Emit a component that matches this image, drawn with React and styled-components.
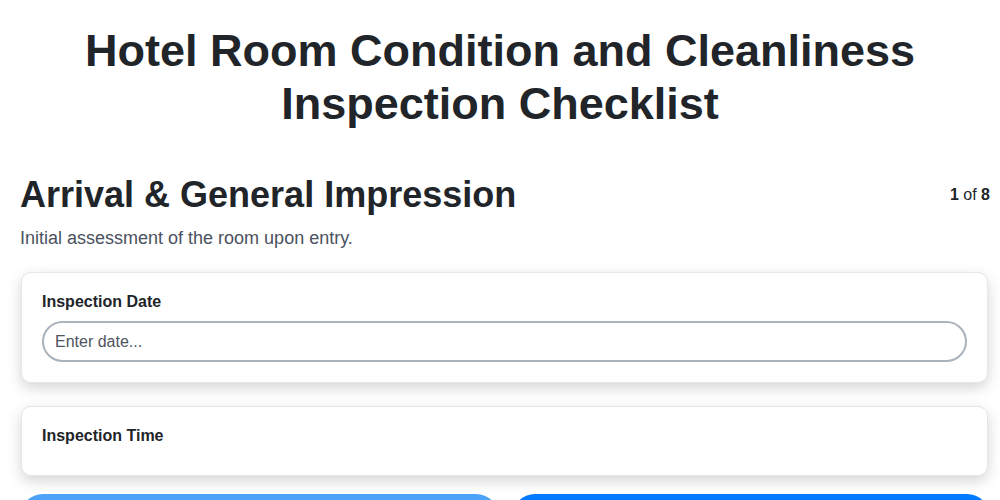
import React from "react";
import styled, { createGlobalStyle } from "styled-components";

const GlobalStyle = createGlobalStyle`
  html, body {
    margin: 0;
    padding: 0;
    background: #ffffff;
    font-family: "Liberation Sans", Arial, sans-serif;
    color: #212529;
  }
  * {
    box-sizing: border-box;
  }
`;

const Page = styled.div`
  padding: 24px 10px 0 20px;
`;

const Title = styled.h1`
  margin: 0 10px 43px 0;
  text-align: center;
  font-size: 45px;
  line-height: 53px;
  font-weight: 700;
  color: #212529;
`;

const SectionHeader = styled.div`
  display: flex;
  justify-content: space-between;
  align-items: center;
`;

const SectionTitle = styled.h2`
  margin: 0;
  font-size: 36px;
  line-height: 43px;
  font-weight: 700;
  color: #212529;
`;

const Progress = styled.div`
  font-size: 16px;
  color: #212529;
  b {
    font-weight: 700;
  }
`;

const Description = styled.p`
  margin: 10px 0 22px;
  font-size: 18px;
  line-height: 24px;
  color: #4a5160;
`;

const Card = styled.div`
  margin: 0 2px 23px 1px;
  padding: 20px;
  background: #ffffff;
  border: 1px solid #e6e6ec;
  border-radius: 10px;
  box-shadow: 0 5px 14px rgba(0, 0, 0, 0.17);
`;

const Label = styled.label`
  display: block;
  margin-bottom: 10px;
  font-size: 16px;
  line-height: 18px;
  font-weight: 700;
  color: #212529;
`;

const Input = styled.input`
  display: block;
  width: 100%;
  height: 41px;
  padding: 0 11px;
  border: 2px solid #aab2bb;
  border-radius: 21px;
  font-family: "Liberation Sans", Arial, sans-serif;
  font-size: 16px;
  color: #212529;
  outline: none;
  &::placeholder {
    color: #4e5560;
  }
`;

const Actions = styled.div`
  display: grid;
  grid-template-columns: 1fr 1fr;
  gap: 13px;
  margin-top: -5px;
`;

const Button = styled.button`
  height: 46px;
  border: none;
  border-radius: 23px;
  background: ${(p) => (p.$primary ? "#007bff" : "#4da3f7")};
  color: #ffffff;
  font-family: "Liberation Sans", Arial, sans-serif;
  font-size: 16px;
  font-weight: 700;
`;

export default function App() {
  return (
    <>
      <GlobalStyle />
      <Page>
        <Title>
          Hotel Room Condition and Cleanliness
          <br />
          Inspection Checklist
        </Title>
        <SectionHeader>
          <SectionTitle>Arrival &amp; General Impression</SectionTitle>
          <Progress>
            <b>1</b> of <b>8</b>
          </Progress>
        </SectionHeader>
        <Description>Initial assessment of the room upon entry.</Description>
        <Card>
          <Label>Inspection Date</Label>
          <Input placeholder="Enter date..." />
        </Card>
        <Card>
          <Label>Inspection Time</Label>
        </Card>
        <Actions>
          <Button>Previous</Button>
          <Button $primary>Next</Button>
        </Actions>
      </Page>
    </>
  );
}
